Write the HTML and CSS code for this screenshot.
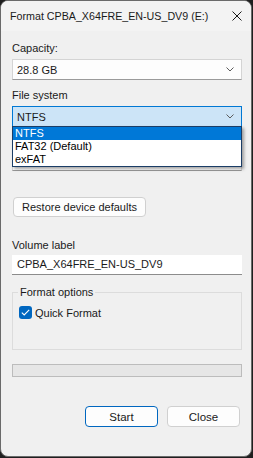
FILE: index.html
```html
<!DOCTYPE html>
<html>
<head>
<meta charset="utf-8">
<link rel="stylesheet" href="styles.css">
</head>
<body>
<div class="window">
  <div class="titlebar">
    <span class="title">Format CPBA_X64FRE_EN-US_DV9 (E:)</span>
    <svg class="close" width="10" height="10" viewBox="0 0 10 10"><path d="M0.5 0.5 L9.5 9.5 M9.5 0.5 L0.5 9.5" stroke="#1a1a1a" stroke-width="1" fill="none"/></svg>
  </div>
  <div class="content">
    <div class="label lbl-cap">Capacity:</div>
    <div class="combo">
      <span>28.8 GB</span>
      <svg class="chev" width="8" height="5" viewBox="0 0 8 5"><path d="M0.5 0.5 L4 4 L7.5 0.5" stroke="#5c5c5c" stroke-width="1" fill="none"/></svg>
    </div>
    <div class="label lbl-fs">File system</div>
    <div class="combo-wrap">
      <div class="combo focused">
        <span>NTFS</span>
        <svg class="chev" width="8" height="5" viewBox="0 0 8 5"><path d="M0.5 0.5 L4 4 L7.5 0.5" stroke="#5c5c5c" stroke-width="1" fill="none"/></svg>
      </div>
      <ul class="dropdown">
        <li class="sel">NTFS</li>
        <li>FAT32 (Default)</li>
        <li>exFAT</li>
      </ul>
    </div>
    <div class="label lbl-alloc"></div>
    <div class="combo combo-alloc"></div>
    <button class="btn restore">Restore device defaults</button>
    <div class="label lbl-vol">Volume label</div>
    <div class="textbox">CPBA_X64FRE_EN-US_DV9</div>
    <fieldset class="group">
      <legend>Format options</legend>
      <label class="check">
        <span class="box"><svg width="9" height="7" viewBox="0 0 9 7"><path d="M0.8 3.6 L3.2 6 L8.2 0.8" stroke="#ffffff" stroke-width="1.1" fill="none"/></svg></span>
        <span>Quick Format</span>
      </label>
    </fieldset>
    <div class="progress"></div>
    <div class="actions">
      <button class="btn primary">Start</button>
      <button class="btn">Close</button>
    </div>
  </div>
</div>
</body>
</html>
```

FILE: styles.css
```css
html, body {
  margin: 0;
  padding: 0;
}
body {
  background: #1f1f1f;
  width: 253px;
  height: 458px;
  font-family: "Segoe UI", "Liberation Sans", Arial, sans-serif;
  font-size: 11px;
  color: #1a1a1a;
}
.window {
  box-sizing: border-box;
  width: 252px;
  height: 457px;
  background: #f0f0f0;
  border: 1px solid #6a6a6a;
  border-radius: 8px;
  overflow: hidden;
}
.titlebar {
  height: 30px;
  background: #f3f3f3;
  display: flex;
  align-items: center;
  justify-content: space-between;
  padding: 0 9px 0 9px;
  font-size: 10.7px;
}
.title {
  line-height: 15px;
  white-space: nowrap;
}
.close {
  display: block;
}
.content {
  padding: 0 9px 0 11px;
}
.label {
  line-height: 15px;
  height: 15px;
}
.lbl-cap { margin-top: 10px; }
.lbl-fs { margin-top: 8px; }
.lbl-alloc { margin-top: 6px; }
.lbl-vol { margin-top: 21px; }
.combo {
  box-sizing: border-box;
  height: 21px;
  margin-top: 3px;
  background: #fdfdfd;
  border: 1px solid #d4d4d4;
  border-bottom-color: #9a9a9a;
  display: flex;
  align-items: center;
  justify-content: space-between;
  padding: 0 7px 0 4px;
}
.combo.focused {
  background: #cce4f7;
  border-color: #0078d4;
}
.combo-alloc {
  margin-top: 2px;
}
.chev { display: block; }
.combo-wrap {
  position: relative;
}
.dropdown {
  position: absolute;
  left: 0;
  right: 0;
  top: calc(100% - 1px);
  margin: 0;
  padding: 0;
  list-style: none;
  background: #ffffff;
  border: 1px solid #1b3d66;
  box-shadow: 2px 2px 3px rgba(0, 0, 0, 0.35);
  z-index: 5;
}
.dropdown li {
  height: 13px;
  line-height: 13px;
  padding-left: 2px;
  color: #000;
  font-size: 11px;
}
.dropdown li.sel {
  background: #0078d7;
  color: #ffffff;
}
.btn {
  box-sizing: border-box;
  font-family: inherit;
  font-size: 11px;
  color: #1a1a1a;
  background: #fdfdfd;
  border: 1px solid #d0d0d0;
  border-radius: 4px;
  height: 20px;
  padding: 0;
  margin: 0;
}
.restore {
  display: block;
  margin: 26px 0 0 1px;
  width: 133px;
}
.textbox {
  box-sizing: border-box;
  height: 20px;
  margin-top: 2px;
  background: #ffffff;
  border-bottom: 1px solid #8c8c8c;
  padding-left: 5px;
  line-height: 19px;
}
.group {
  margin: 10px 0 0 0;
  padding: 0 0 0 6px;
  border: 1px solid #dcdcdc;
  height: 65px;
  box-sizing: border-box;
  min-width: 0;
}
.group legend {
  padding: 0 2px;
  margin-left: -1px;
  line-height: 14px;
}
.check {
  display: flex;
  align-items: center;
  gap: 3px;
  margin-top: 7px;
}
.box {
  width: 13px;
  height: 13px;
  border-radius: 3px;
  background: #0067c0;
  display: flex;
  align-items: center;
  justify-content: center;
}
.box svg { display: block; }
.progress {
  box-sizing: border-box;
  height: 13px;
  margin-top: 14px;
  background: #e6e6e6;
  border: 1px solid #bcbcbc;
}
.actions {
  display: flex;
  justify-content: flex-end;
  gap: 9px;
  margin-top: 29px;
  padding-right: 2px;
}
.actions .btn {
  width: 73px;
  height: 21px;
  font-size: 11.5px;
}
.actions .primary {
  border-color: #0067c0;
}
```
